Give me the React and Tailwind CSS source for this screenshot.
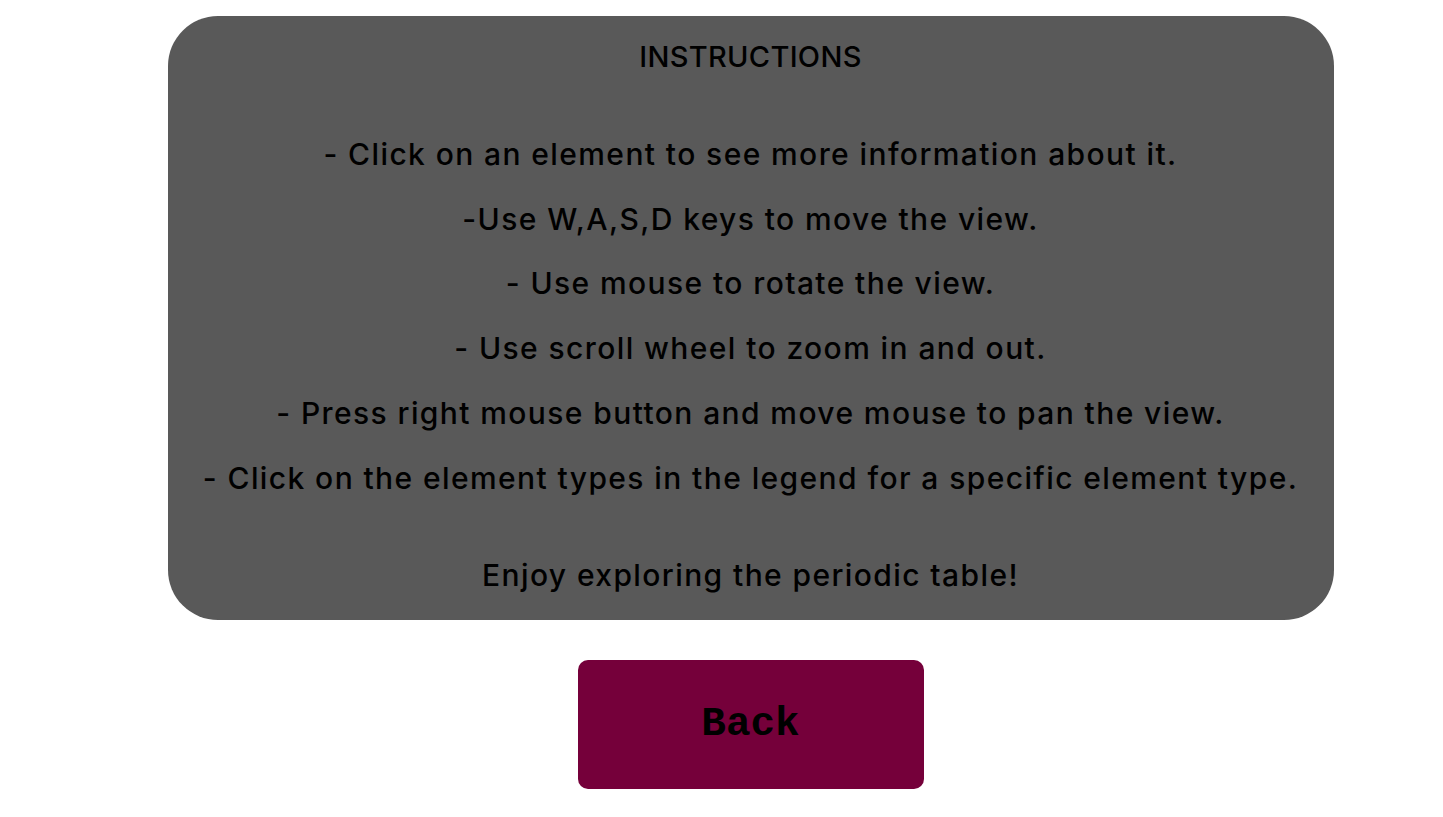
import React from 'react';

const lines = [
  '- Click on an element to see more information about it.',
  '-Use W,A,S,D keys to move the view.',
  '- Use mouse to rotate the view.',
  '- Use scroll wheel to zoom in and out.',
  '- Press right mouse button and move mouse to pan the view.',
  '- Click on the element types in the legend for a specific element type.',
];

const App = () => {
  return (
    <div className="min-h-screen bg-white pl-[58px] flex flex-col items-center" style={{ fontFamily: 'Inter, "DejaVu Sans", sans-serif' }}>
      <div className="mt-4 w-[1166px] h-[604px] bg-[#595959] rounded-[50px] pt-[23px] flex flex-col items-center text-black">
        <h2 className="text-[29px] leading-[36px] font-medium tracking-[0.3px]">INSTRUCTIONS</h2>
        <div className="mt-[47px] flex flex-col items-center">
          {lines.map((line) => (
            <p key={line} className="text-[30px] leading-[64.7px] font-medium tracking-[1.4px]">{line}</p>
          ))}
          <p className="mt-[33px] text-[30px] leading-[64.7px] font-medium tracking-[1.4px]">Enjoy exploring the periodic table!</p>
        </div>
      </div>
      <button className="mt-10 w-[346px] h-[129px] rounded-[10px] bg-[#75003a] text-black text-[41px] font-bold" style={{ fontFamily: '"Liberation Mono", monospace' }}>
        Back
      </button>
    </div>
  );
};

export default App;
